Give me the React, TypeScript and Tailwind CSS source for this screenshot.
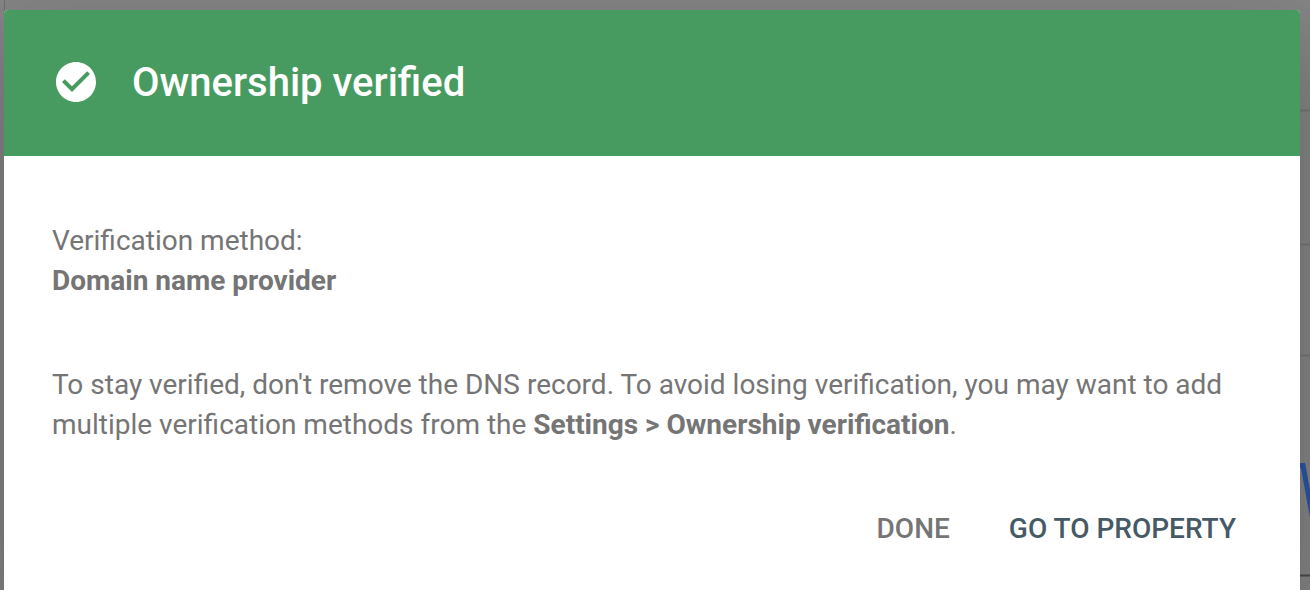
import React from "react";

const gridLines = [110, 244, 355];

function Backdrop() {
  return (
    <div className="absolute inset-0 flex justify-between bg-[#868686]" aria-hidden="true">
      <div className="w-[5px] border-r border-[#6e6e6e]" />
      <svg width="10" height="590" fill="none">
        {gridLines.map((y) => (
          <path key={y} d={`M0 ${y + 0.5}H10`} stroke="#777777" strokeWidth="2" />
        ))}
        <path d="M-4 465.5H3L13 520" stroke="#2c56a6" strokeWidth="5" />
        <path d="M0 575.5H10" stroke="#4c4c4c" strokeWidth="2" />
      </svg>
    </div>
  );
}

export default function App() {
  return (
    <div className="relative flex h-screen items-start overflow-hidden pt-[10px] pr-[10px] pl-1 font-['Roboto','Liberation_Sans',sans-serif] antialiased">
      <Backdrop />
      <section
        role="dialog"
        aria-labelledby="dialog-title"
        className="relative w-full rounded-t-[4px] bg-white text-[28px] leading-10 text-[#757575] shadow-[0_48px_76px_6px_rgba(0,0,0,0.14),0_18px_92px_16px_rgba(0,0,0,0.09)]"
      >
        <header className="flex items-start gap-8 rounded-t-[4px] bg-[#489b60] p-12 text-white">
          <svg viewBox="0 0 24 24" className="size-12 shrink-0" fill="currentColor" aria-hidden="true">
            <path d="M12 2C6.48 2 2 6.48 2 12s4.480 10 10 10 10-4.480 10-10S17.520 2 12 2zm-2 15l-5-5 1.410-1.410L10 14.170l7.590-7.590L19 8l-9 9z" />
          </svg>
          <h1 id="dialog-title" className="text-[40px] leading-[50px] font-medium">
            Ownership verified
          </h1>
        </header>
        <div className="px-12 pt-[65px]">
          <p>
            Verification method:
            <br />
            <strong>Domain name provider</strong>
          </p>
          <p className="mt-16">
            To stay verified, don't remove the DNS record. To avoid losing verification, you may want to add
            multiple verification methods from the <strong>Settings &gt; Ownership verification</strong>.
          </p>
        </div>
        <footer className="flex justify-end gap-[59px] px-16 py-16 font-medium">
          <button type="button">DONE</button>
          <button type="button" className="text-[#455a64]">GO TO PROPERTY</button>
        </footer>
      </section>
    </div>
  );
}
